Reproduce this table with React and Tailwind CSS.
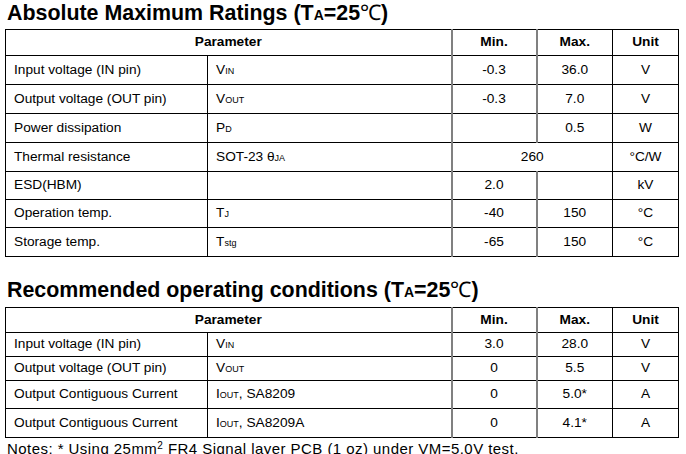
import React from 'react';

const maxRatings = [
  { name: 'Input voltage (IN pin)', sym: ['V', 'IN'], min: '-0.3', max: '36.0', unit: 'V', h: 'h-[29px]' },
  { name: 'Output voltage (OUT pin)', sym: ['V', 'OUT'], min: '-0.3', max: '7.0', unit: 'V', h: 'h-[29px]' },
  { name: 'Power dissipation', sym: ['P', 'D'], min: '', max: '0.5', unit: 'W', h: 'h-[29px]' },
  { name: 'Thermal resistance', sym: ['SOT-23 θ', 'JA'], span: '260', unit: '°C/W', h: 'h-[29px]' },
  { name: 'ESD(HBM)', sym: null, min: '2.0', max: '', unit: 'kV', h: 'h-[28px]' },
  { name: 'Operation temp.', sym: ['T', 'J'], min: '-40', max: '150', unit: '°C', h: 'h-[28px]' },
  { name: 'Storage temp.', sym: ['T', 'stg'], min: '-65', max: '150', unit: '°C', h: 'h-[29px]' },
];

const recommended = [
  { name: 'Input voltage (IN pin)', sym: ['V', 'IN'], min: '3.0', max: '28.0', unit: 'V', h: 'h-[24px]' },
  { name: 'Output voltage (OUT pin)', sym: ['V', 'OUT'], min: '0', max: '5.5', unit: 'V', h: 'h-[24px]' },
  { name: 'Output Contiguous Current', sym: ['I', 'OUT', ', SA8209'], min: '0', max: '5.0*', unit: 'A', h: 'h-[28px]' },
  { name: 'Output Contiguous Current', sym: ['I', 'OUT', ', SA8209A'], min: '0', max: '4.1*', unit: 'A', h: 'h-[29px]' },
];

function Symbol({ sym }) {
  if (!sym) return null;
  return (
    <span>
      {sym[0]}
      <span className="text-[9px]">{sym[1]}</span>
      {sym[2]}
    </span>
  );
}

function Title({ children, className }) {
  return (
    <div className={`pl-[7px] text-[21.4px] font-bold leading-[24px] text-black ${className}`}>
      {children} (T<span className="text-[14px]">A</span>=25<span className="font-normal">℃</span>)
    </div>
  );
}

function SpecTable({ rows, headH }) {
  const td = 'border border-black px-[8px] text-left';
  const num = 'border border-black text-center';
  const gray = 'border-l-2 border-l-[#808080]';
  return (
    <table className="ml-[5px] w-[673px] table-fixed border-collapse border border-[#222] text-[13.7px] text-black">
      <colgroup>
        <col className="w-[202px]" />
        <col className="w-[244px]" />
        <col className="w-[85px]" />
        <col className="w-[76px]" />
        <col className="w-[66px]" />
      </colgroup>
      <thead>
        <tr className={headH}>
          <th colSpan={2} className="border border-black text-center font-bold">Parameter</th>
          <th className={`${num} ${gray} font-bold`}>Min.</th>
          <th className={`${num} ${gray} font-bold`}>Max.</th>
          <th className={`${num} font-bold`}>Unit</th>
        </tr>
      </thead>
      <tbody>
        {rows.map((r, i) => (
          <tr key={i} className={r.h}>
            <td className={td}>{r.name}</td>
            <td className={td}><Symbol sym={r.sym} /></td>
            {r.span ? (
              <td colSpan={2} className={`${num} ${gray}`}>{r.span}</td>
            ) : (
              <>
                <td className={`${num} ${gray}`}>{r.min}</td>
                <td className={`${num} ${gray}`}>{r.max}</td>
              </>
            )}
            <td className={num}>{r.unit}</td>
          </tr>
        ))}
      </tbody>
    </table>
  );
}

export default function App() {
  return (
    <div className="w-[686px] h-[454px] overflow-hidden bg-white" style={{ fontFamily: '"Liberation Sans", Arial, sans-serif' }}>
      <Title className="h-[29px] pt-[1px]">Absolute Maximum Ratings</Title>
      <SpecTable rows={maxRatings} headH="h-[26px]" />
      <Title className="h-[50px] pt-[21px]">Recommended operating conditions</Title>
      <SpecTable rows={recommended} headH="h-[25px]" />
      <div className="mt-[2px] pl-[7px] text-[15px] leading-[17px] tracking-[0.45px] text-black">
        Notes: * Using 25mm<sup className="text-[10px]">2</sup> FR4 Signal layer PCB (1 oz) under VM=5.0V test.
      </div>
    </div>
  );
}
